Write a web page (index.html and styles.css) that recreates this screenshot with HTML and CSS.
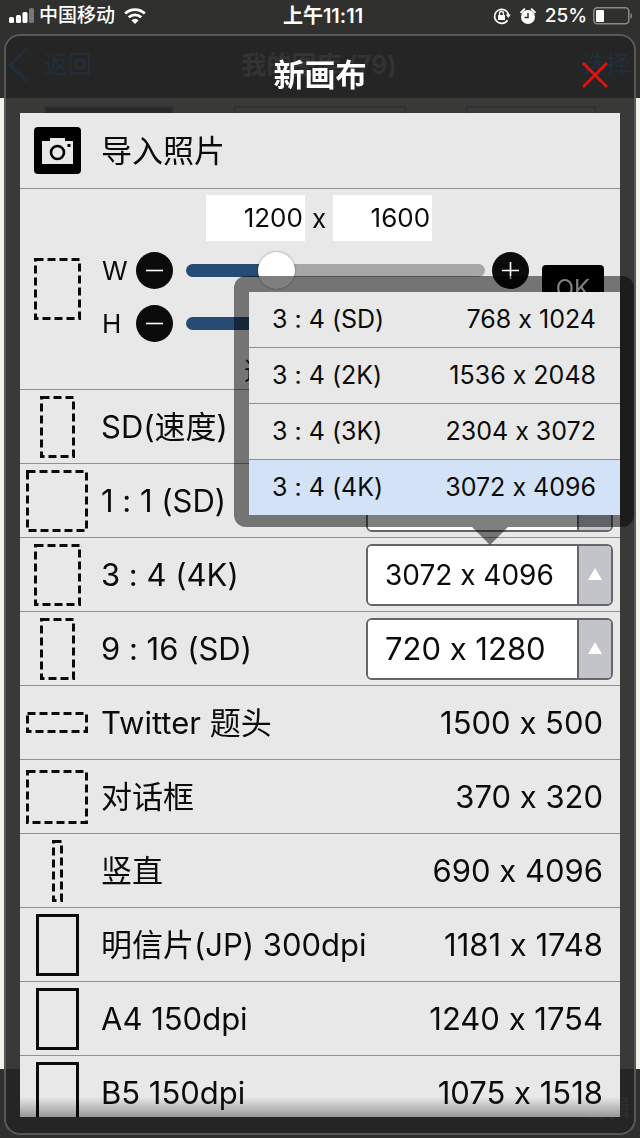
FILE: index.html
```html
<!DOCTYPE html>
<html lang="zh-CN">
<head>
  <meta charset="UTF-8" />
  <meta name="viewport" content="width=device-width, initial-scale=1.0" />
  <title>新画布</title>
  <link rel="stylesheet" href="styles.css">
</head>
<body>
  <!-- Gallery screen behind the dialog -->
  <div class="screen">
    <div class="statusbar">
      <div class="status-left">
        <svg width="25" height="16" viewBox="0 0 25 16" aria-hidden="true">
          <rect x="0" y="9" width="5" height="6" rx="1.500" fill="#fff"/>
          <rect x="7" y="7" width="5" height="8" rx="1.500" fill="#fff"/>
          <rect x="13.500" y="4" width="5" height="11" rx="1.500" fill="#fff"/>
          <rect x="20" y="0" width="5" height="15" rx="1.500" fill="#777"/>
        </svg>
        <span>中国移动</span>
        <svg class="wifi" width="22" height="16" viewBox="0 0 22 16" fill="none" stroke="#fff" stroke-width="2.800" aria-hidden="true">
          <path d="M1.200 5.600a14 14 0 0 1 19.600 0"/>
          <path d="M4.800 9.300a9 9 0 0 1 12.400 0"/>
          <path d="M11 16l-3.600-3.700a5 5 0 0 1 7.200 0z" fill="#fff" stroke="none"/>
        </svg>
      </div>
      <div class="status-time">上午11:11</div>
      <div class="status-right">
        <svg width="18" height="18" viewBox="0 0 18 18" fill="none" stroke="#fff" stroke-width="1.600" aria-hidden="true">
          <path d="M14.500 13.200A7 7 0 1 1 15.500 8"/>
          <path d="M12.800 7.500h5l-2.500 3.500z" fill="#fff" stroke="none"/>
          <rect x="5" y="8" width="7" height="5" rx=".6" fill="#fff" stroke="none"/>
          <path d="M6.500 8V6.500a2 2 0 0 1 4 0V8" stroke-width="1.300"/>
        </svg>
        <svg width="16" height="17" viewBox="0 0 16 17" aria-hidden="true">
          <circle cx="8" cy="9" r="7" fill="#fff"/>
          <path d="M1.200 4.200L4.300 1.300M14.800 4.200l-3.100-2.900" stroke="#fff" stroke-width="2" stroke-linecap="round"/>
          <path d="M8 5v4.500H4.500" fill="none" stroke="#30302e" stroke-width="1.500"/>
        </svg>
        <span>25%</span>
        <svg width="40" height="18" viewBox="0 0 40 18" aria-hidden="true">
          <rect x=".8" y=".8" width="35" height="16" rx="3.500" fill="none" stroke="#8a8a8a" stroke-width="1.500"/>
          <rect x="3" y="3" width="8" height="12" rx="1" fill="#fff"/>
          <path d="M37.500 6a3.500 3.500 0 0 1 0 6z" fill="#8a8a8a"/>
        </svg>
      </div>
    </div>
    <div class="navbar">
      <a class="nav-back" href="#">
        <svg width="20" height="34" viewBox="0 0 20 34" aria-hidden="true"><path d="M19 1L2 17l17 16" fill="none" stroke="currentColor" stroke-width="3"/></svg>
        返回
      </a>
      <span class="nav-title">我的图库 (79)</span>
      <a class="nav-select" href="#">选择</a>
    </div>
    <div class="gallery">
      <div class="thumb thumb-dark"></div>
      <div class="thumb"></div>
      <div class="thumb"></div>
    </div>
    <div class="toolbar"><span>编辑</span></div>
  </div>

  <section class="dialog" role="dialog" aria-labelledby="dialogTitle">
    <header class="dialog-head">
      <h1 id="dialogTitle">新画布</h1>
      <button class="close-button" type="button" aria-label="关闭">
        <svg width="26" height="26" viewBox="0 0 26 26"><path d="M1 1l24 24M25 1L1 25" stroke="#e60f0f" stroke-width="2.800"/></svg>
      </button>
    </header>

    <ul class="list">
      <li>
        <button class="row" type="button">
          <span class="icon">
            <svg width="47" height="47" viewBox="0 0 47 47">
              <rect width="47" height="47" rx="4"/>
              <path d="M8 14h8v-3h15v3h8v23H8z" fill="#e8e8e8"/>
              <circle cx="23.500" cy="25.500" r="6.500" fill="none" stroke="#000" stroke-width="2.600"/>
              <rect x="33.500" y="17" width="3" height="3"/>
            </svg>
          </span>
          <span class="name">导入照片</span>
        </button>
      </li>

      <!-- Custom size -->
      <li class="custom">
        <span class="icon">
          <svg class="frame" width="47" height="62"><rect x="1.500" y="1.500" width="44" height="59"/></svg>
        </span>
        <div class="custom-body">
          <div class="size-inputs">
            <input type="text" inputmode="numeric" value="1200" aria-label="宽度">
            <span>x</span>
            <input type="text" inputmode="numeric" value="1600" aria-label="高度">
          </div>
          <div class="size-sliders">
            <div class="sliders">
              <div class="slider">
                <label for="rangeW">W</label>
                <button class="step" type="button" aria-label="减少宽度"><svg width="17" height="17"><path d="M0 8.500h17"/></svg></button>
                <input id="rangeW" type="range" min="100" max="4096" value="1200" style="--fill: 30%">
                <button class="step" type="button" aria-label="增加宽度"><svg width="17" height="17"><path d="M0 8.500h17M8.500 0v17"/></svg></button>
              </div>
              <div class="slider">
                <label for="rangeH">H</label>
                <button class="step" type="button" aria-label="减少高度"><svg width="17" height="17"><path d="M0 8.500h17"/></svg></button>
                <input id="rangeH" type="range" min="100" max="4096" value="1600" style="--fill: 40%">
                <button class="step" type="button" aria-label="增加高度"><svg width="17" height="17"><path d="M0 8.500h17M8.500 0v17"/></svg></button>
              </div>
            </div>
            <button class="ok" type="button">OK</button>
          </div>
          <p class="hint">选择画布尺寸</p>
        </div>
      </li>

      <li>
        <button class="row" type="button">
          <span class="icon"><svg class="frame" width="35" height="62"><rect x="1.500" y="1.500" width="32" height="59"/></svg></span>
          <span class="name">SD(速度)</span>
        </button>
      </li>
      <li class="row">
        <span class="icon"><svg class="frame" width="62" height="62"><rect x="1.500" y="1.500" width="59" height="59"/></svg></span>
        <label class="name" for="size11">1 : 1 (SD)</label>
        <span class="picker">
          <select id="size11"><option>720 x 720</option></select>
          <svg width="34" height="58"><path d="M9 34h14l-7-12z"/></svg>
        </span>
      </li>
      <li class="row">
        <span class="icon"><svg class="frame" width="47" height="62"><rect x="1.500" y="1.500" width="44" height="59"/></svg></span>
        <label class="name" for="size34">3 : 4 (4K)</label>
        <span class="picker">
          <select id="size34" class="long"><option>3072 x 4096</option></select>
          <svg width="34" height="58"><path d="M9 34h14l-7-12z"/></svg>
        </span>
      </li>
      <li class="row">
        <span class="icon"><svg class="frame" width="35" height="62"><rect x="1.500" y="1.500" width="32" height="59"/></svg></span>
        <label class="name" for="size916">9 : 16 (SD)</label>
        <span class="picker">
          <select id="size916"><option>720 x 1280</option></select>
          <svg width="34" height="58"><path d="M9 34h14l-7-12z"/></svg>
        </span>
      </li>
      <li>
        <button class="row" type="button">
          <span class="icon"><svg class="frame" width="62" height="21"><rect x="1.500" y="1.500" width="59" height="18"/></svg></span>
          <span class="name">Twitter 题头</span>
          <span class="size">1500 x 500</span>
        </button>
      </li>
      <li>
        <button class="row" type="button">
          <span class="icon"><svg class="frame" width="62" height="54"><rect x="1.500" y="1.500" width="59" height="51"/></svg></span>
          <span class="name">对话框</span>
          <span class="size">370 x 320</span>
        </button>
      </li>
      <li>
        <button class="row" type="button">
          <span class="icon"><svg class="frame" width="11" height="62"><rect x="1.500" y="1.500" width="8" height="59"/></svg></span>
          <span class="name">竖直</span>
          <span class="size">690 x 4096</span>
        </button>
      </li>
      <li>
        <button class="row" type="button">
          <span class="icon"><svg class="frame solid" width="43" height="62"><rect x="1.500" y="1.500" width="40" height="59"/></svg></span>
          <span class="name">明信片(JP) 300dpi</span>
          <span class="size">1181 x 1748</span>
        </button>
      </li>
      <li>
        <button class="row" type="button">
          <span class="icon"><svg class="frame solid" width="43" height="62"><rect x="1.500" y="1.500" width="40" height="59"/></svg></span>
          <span class="name">A4 150dpi</span>
          <span class="size">1240 x 1754</span>
        </button>
      </li>
      <li>
        <button class="row" type="button">
          <span class="icon"><svg class="frame solid" width="43" height="62"><rect x="1.500" y="1.500" width="40" height="59"/></svg></span>
          <span class="name">B5 150dpi</span>
          <span class="size">1075 x 1518</span>
        </button>
      </li>
    </ul>

    <!-- Open menu of the 3 : 4 picker -->
    <div class="popup">
      <div class="popup-list" role="listbox" aria-label="3 : 4">
        <button type="button" role="option"><span>3 : 4 (SD)</span><span>768 x 1024</span></button>
        <button type="button" role="option"><span>3 : 4 (2K)</span><span>1536 x 2048</span></button>
        <button type="button" role="option"><span>3 : 4 (3K)</span><span>2304 x 3072</span></button>
        <button class="selected" type="button" role="option" aria-selected="true"><span>3 : 4 (4K)</span><span>3072 x 4096</span></button>
      </div>
    </div>
  </section>
</body>
</html>
```

FILE: styles.css
```css
* {
  box-sizing: border-box;
}
body {
  margin: 0;
  font-family: Inter, "Noto Sans CJK SC", sans-serif;
  /* keep the "x" between two numbers a plain letter */
  font-variant-ligatures: no-contextual;
  background-color: #f3f2e8;
  color: #0b0b0b;
}
button, input, select {
  font-family: inherit;
  font-variant-ligatures: inherit;
  color: inherit;
  margin: 0;
  border: 0;
  border-radius: 0;
}
button {
  padding: 0;
  background: none;
  cursor: pointer;
}
svg {
  display: block;
  flex: none;
}
a {
  color: #007aff;
  text-decoration: none;
}

/* Gallery screen */
.screen {
  display: flex;
  flex-direction: column;
  height: 100vh;
  overflow: hidden;
}
.statusbar {
  display: grid;
  grid-template-columns: 1fr auto 1fr;
  align-items: center;
  height: 34px;
  padding: 0 7px 2px 9px;
  background-color: #30302e;
  color: #fff;
  font-size: 19px;
  line-height: 24px;
  font-weight: 500;
}
.status-left, .status-right {
  display: flex;
  align-items: center;
  gap: 6px;
}
.status-left {
  gap: 5px;
}
.wifi {
  margin-left: 4px;
}
.status-right {
  justify-content: flex-end;
}
.status-right svg {
  margin-right: 3px;
}
.status-right svg:last-child {
  margin-right: 0;
}
.status-time {
  padding-left: 4px;
  font-size: 20px;
  font-weight: 600;
}
.navbar {
  display: grid;
  grid-template-columns: 1fr auto 1fr;
  align-items: center;
  height: 64px;
  padding: 0 10px 2px 8px;
  background-color: #30302e;
  color: #bbb;
  font-size: 24px;
  line-height: 30px;
}
.nav-back {
  display: flex;
  align-items: center;
  gap: 16px;
}
.nav-title {
  font-size: 25px;
  font-weight: 600;
}
.nav-select {
  text-align: right;
}
.gallery {
  flex: 1;
  display: grid;
  grid-template-columns: 3fr 4fr 3fr;
  gap: 60px;
  padding: 8px 44px;
}
.thumb {
  height: 170px;
  border: 2px solid #aaa;
}
.thumb-dark {
  background-color: #4a4a66;
}
.toolbar {
  display: flex;
  justify-content: flex-end;
  height: 69px;
  padding: 20px 10px;
  background-color: #30302e;
  color: #888;
  font-size: 24px;
}

/* Dialog */
.dialog {
  position: fixed;
  top: 34px;
  right: 4px;
  bottom: 3px;
  left: 4px;
  display: flex;
  flex-direction: column;
  padding: 0 14px 16px;
  border: 2px solid #585858;
  border-radius: 16px;
  background-color: rgba(37, 37, 37, 0.9);
}
.dialog-head {
  display: grid;
  grid-template-columns: 1fr auto 1fr;
  align-items: center;
  height: 77px;
}
.dialog-head h1 {
  grid-column: 2;
  margin: 0;
  color: #fff;
  font-size: 31px;
  line-height: 40px;
}
.close-button {
  justify-self: end;
  margin-right: 12px;
}
.list {
  position: relative;
  flex: 1;
  min-height: 0;
  overflow: hidden;
  margin: 0;
  padding: 0;
  list-style: none;
  background-color: #e8e8e8;
}
/* Fade at the lower edge of the list */
.list::after {
  content: "";
  position: absolute;
  right: 0;
  bottom: 0;
  left: 0;
  height: 20px;
  background: linear-gradient(rgba(0, 0, 0, 0), rgba(0, 0, 0, 0.35));
}
.row {
  display: flex;
  align-items: center;
  gap: 7px;
  width: 100%;
  height: 74px;
  padding-right: 17px;
  font-size: 31px;
  line-height: 36px;
  text-align: left;
}
.list > li {
  border-bottom: 1px solid #909090;
}
.list > li > .row {
  height: 73px;
}
.list > li:first-child > .row {
  height: 75px;
}
.icon {
  flex: none;
  display: flex;
  justify-content: center;
  width: 74px;
}
.frame rect {
  fill: none;
  stroke: #0b0b0b;
  stroke-width: 3;
  stroke-dasharray: 8 4;
}
.frame.solid rect {
  stroke-dasharray: none;
}
.name {
  flex: 1;
  white-space: nowrap;
}
.size {
  white-space: nowrap;
}

/* Size picker */
li.row {
  padding-right: 7px;
}
.picker {
  display: flex;
  width: 247px;
  height: 62px;
  overflow: hidden;
  border: 2px solid #66666a;
  border-radius: 6px;
  background-color: #fff;
}
.picker select {
  flex: 1;
  min-width: 0;
  padding: 0 0 0 17px;
  appearance: none;
  background-color: #fff;
  font-size: 31px;
}
.picker .long {
  font-size: 28px;
}
.picker svg {
  border-left: 2px solid #66666a;
  background-color: #c3c4ca;
  fill: #fff;
}

/* Custom size */
.custom {
  display: flex;
  align-items: center;
  gap: 8px;
  padding-right: 16px;
  font-size: 26px;
}
.custom-body {
  flex: 1;
  padding-top: 6px;
}
.size-inputs {
  display: flex;
  justify-content: center;
  align-items: center;
  gap: 7px;
  padding-right: 68px;
}
.size-inputs input {
  width: 99px;
  height: 46px;
  padding: 0 2px 2px;
  background-color: #fff;
  font-size: 26px;
  text-align: right;
}
.size-sliders {
  display: flex;
  align-items: flex-start;
  gap: 13px;
  margin-top: 11px;
}
.sliders {
  flex: 1;
  display: flex;
  flex-direction: column;
  gap: 16px;
}
.slider {
  display: flex;
  align-items: center;
}
.slider label {
  width: 34px;
}
.step {
  display: flex;
  flex: none;
  align-items: center;
  justify-content: center;
  width: 37px;
  height: 37px;
  border-radius: 50%;
  background-color: #0b0b0b;
}
.step path {
  stroke: #fff;
  stroke-width: 1.6;
}
.slider input {
  flex: 1;
  min-width: 0;
  height: 37px;
  margin: 0 7px 0 13px;
  appearance: none;
  background: none;
}
.slider input::-webkit-slider-runnable-track {
  height: 13px;
  border-radius: 7px;
  background: linear-gradient(90deg, #264c75 var(--fill), #a6a6a6 var(--fill));
}
.slider input::-webkit-slider-thumb {
  appearance: none;
  width: 37px;
  height: 37px;
  margin-top: -12px;
  border-radius: 50%;
  background-color: #fff;
  box-shadow: 0 0 2px rgba(0, 0, 0, 0.5);
}
.ok {
  width: 62px;
  height: 46px;
  margin-top: 13px;
  border-radius: 4px;
  background-color: #000;
  color: #fff;
  font-size: 24px;
}
.hint {
  margin: 14px 0 3px;
  padding-right: 68px;
  font-size: 25px;
  line-height: 30px;
  text-align: center;
}

/* Popup menu */
.popup {
  position: absolute;
  top: 240px;
  right: 0;
  width: 400px;
  padding: 16px 14px 12px 15px;
  border-radius: 12px;
  background-color: rgba(0, 0, 0, 0.5);
}
.popup::after {
  content: "";
  position: absolute;
  top: 100%;
  right: 126px;
  border: 18px solid transparent;
  border-top-color: rgba(0, 0, 0, 0.5);
  border-bottom: 0;
}
.popup-list {
  display: flex;
  flex-direction: column;
  background-color: #e8e8e8;
}
.popup-list button {
  display: flex;
  justify-content: space-between;
  padding: 0 24px 0 23px;
  font-size: 25px;
  line-height: 55px;
}
.popup-list button + button {
  border-top: 1px solid #909090;
}
.popup-list .selected {
  background-color: #d3e2f6;
}
```
